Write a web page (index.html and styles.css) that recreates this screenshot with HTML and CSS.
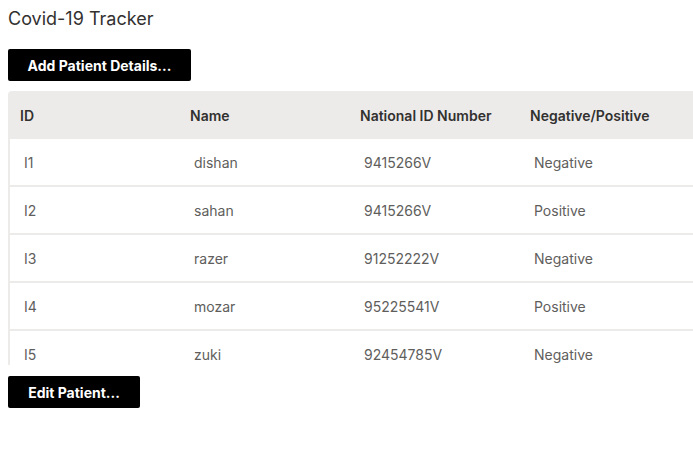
FILE: index.html
```html
<!DOCTYPE html>
<html>
<head>
<meta charset="utf-8">
<link rel="stylesheet" href="styles.css">
</head>
<body>
<h1 class="title">Covid-19 Tracker</h1>
<button class="btn btn-add">Add Patient Details...</button>
<div class="table-wrap">
  <table class="grid">
    <colgroup>
      <col class="c"><col class="c"><col class="c"><col class="c"><col class="c">
    </colgroup>
    <thead>
      <tr><th>ID</th><th>Name</th><th>National ID Number</th><th>Negative/Positive</th><th></th></tr>
    </thead>
    <tbody>
      <tr><td>I1</td><td>dishan</td><td>9415266V</td><td>Negative</td><td></td></tr>
      <tr><td>I2</td><td>sahan</td><td>9415266V</td><td>Positive</td><td></td></tr>
      <tr><td>I3</td><td>razer</td><td>91252222V</td><td>Negative</td><td></td></tr>
      <tr><td>I4</td><td>mozar</td><td>95225541V</td><td>Positive</td><td></td></tr>
      <tr><td>I5</td><td>zuki</td><td>92454785V</td><td>Negative</td><td></td></tr>
    </tbody>
  </table>
</div>
<button class="btn btn-edit">Edit Patient...</button>
</body>
</html>
```

FILE: styles.css
```css
html, body {
  margin: 0;
  padding: 0;
  background: #ffffff;
  overflow: hidden;
}
body {
  padding: 8px;
  font-family: Inter, "Noto Sans", sans-serif;
  color: #323130;
}
.title {
  margin: 0;
  font-size: 18px;
  font-weight: 400;
  line-height: 22px;
  color: #323130;
}
.btn {
  display: block;
  height: 32px;
  padding: 0;
  border: none;
  border-radius: 2px;
  background: #000000;
  color: #ffffff;
  font-family: Inter, "Noto Sans", sans-serif;
  font-size: 14px;
  font-weight: 700;
  white-space: nowrap;
  text-align: center;
  cursor: pointer;
}
.btn-add {
  margin-top: 19px;
  width: 183px;
}
.btn-edit {
  margin-top: 11px;
  width: 132px;
}
.table-wrap {
  margin-top: 10px;
  margin-right: -8px;
  height: 274px;
  overflow: hidden;
}
.grid {
  border-collapse: separate;
  border-spacing: 0;
  table-layout: fixed;
  width: 850px;
}
.grid col.c {
  width: 170px;
}
.grid th {
  height: 48px;
  padding: 0 12px;
  background: #edebe9;
  text-align: left;
  font-size: 14px;
  font-weight: 600;
  color: #323130;
  white-space: nowrap;
}
.grid th:first-child {
  border-top-left-radius: 4px;
}
.grid td {
  height: 46px;
  padding: 0 16px;
  border-bottom: 2px solid #edebe9;
  font-size: 14px;
  color: #605e5c;
  white-space: nowrap;
}
.grid td:first-child {
  border-left: 2px solid #edebe9;
  padding-left: 14px;
}
```
